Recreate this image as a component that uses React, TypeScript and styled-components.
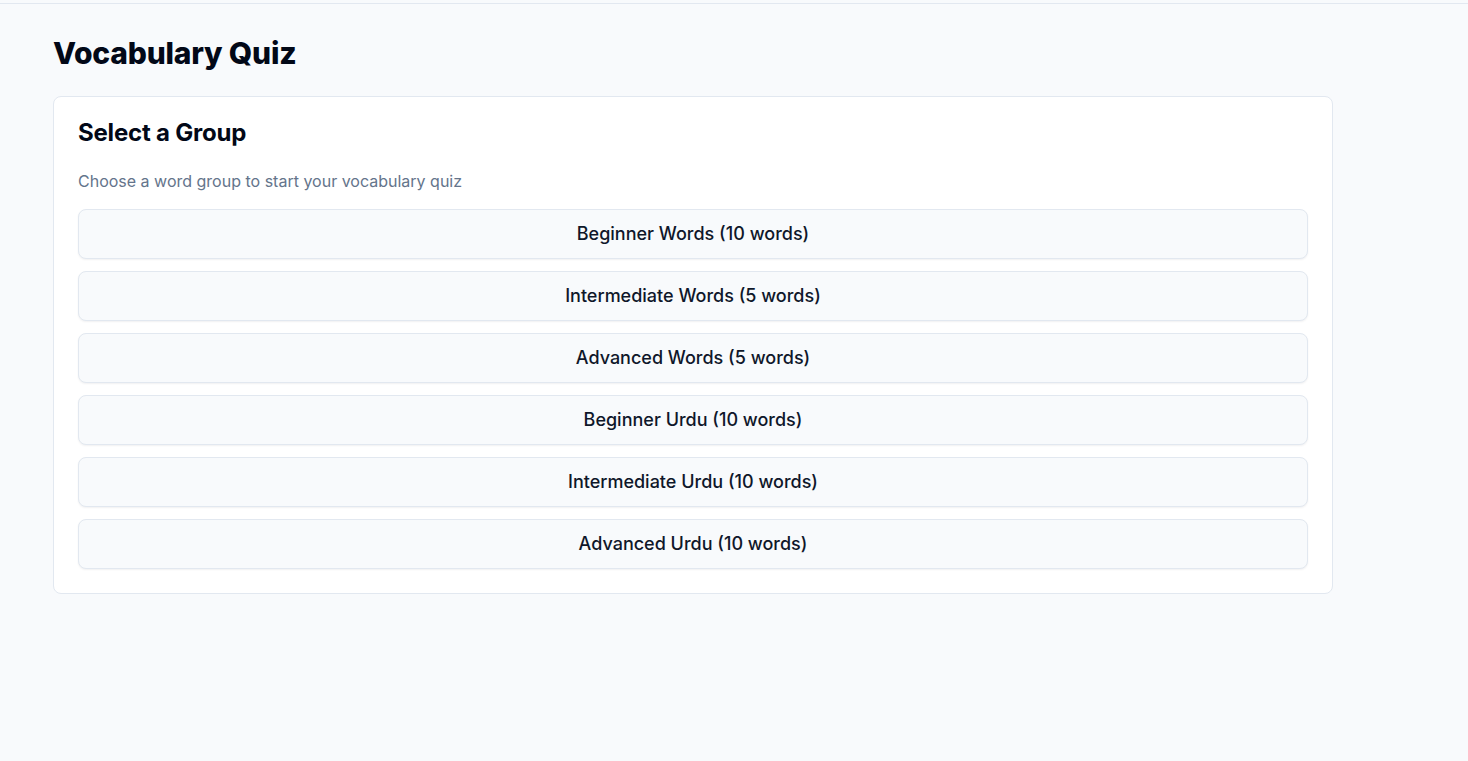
import React from "react";
import styled, { createGlobalStyle } from "styled-components";

const Global = createGlobalStyle`
  html, body { margin: 0; padding: 0; background: #f8fafc; }
  body { font-family: Inter, "Noto Sans", sans-serif; color: #020817; }
  * { box-sizing: border-box; }
`;

const TopBar = styled.div`
  height: 4px;
  border-bottom: 1px solid #e2e8f0;
  background: #f8fafc;
`;

const Page = styled.main`
  padding: 30px 0 40px 53px;
  min-height: 757px;
`;

const Title = styled.h1`
  margin: 0 0 24px;
  font-family: Inter, sans-serif;
  font-size: 30px;
  line-height: 38px;
  font-weight: 800;
  letter-spacing: -0.2px;
  color: #020817;
`;

const Card = styled.section`
  width: 1280px;
  background: #ffffff;
  border: 1px solid #e2e8f0;
  border-radius: 8px;
  padding: 24px;
`;

const CardTitle = styled.h2`
  margin: 0;
  font-family: Inter, sans-serif;
  font-size: 24px;
  line-height: 24px;
  font-weight: 700;
  letter-spacing: -0.2px;
  color: #020817;
`;

const Description = styled.p`
  margin: 24px 0 16px;
  font-size: 16px;
  line-height: 24px;
  color: #64748b;
`;

const List = styled.div`
  display: flex;
  flex-direction: column;
  gap: 12px;
`;

const GroupButton = styled.button`
  height: 50px;
  width: 100%;
  display: flex;
  align-items: center;
  justify-content: center;
  padding: 0 16px 2px;
  background: #f8fafc;
  border: 1px solid #e2e8f0;
  border-radius: 8px;
  box-shadow: 0 1px 2px rgba(15, 23, 42, 0.06);
  font-family: Inter, sans-serif;
  font-size: 18px;
  font-weight: 500;
  color: #0f172a;
  cursor: pointer;
`;

const groups = [
  "Beginner Words (10 words)",
  "Intermediate Words (5 words)",
  "Advanced Words (5 words)",
  "Beginner Urdu (10 words)",
  "Intermediate Urdu (10 words)",
  "Advanced Urdu (10 words)",
];

export default function App() {
  return (
    <>
      <Global />
      <TopBar />
      <Page>
        <Title>Vocabulary Quiz</Title>
        <Card>
          <CardTitle>Select a Group</CardTitle>
          <Description>Choose a word group to start your vocabulary quiz</Description>
          <List>
            {groups.map((g) => (
              <GroupButton key={g}>{g}</GroupButton>
            ))}
          </List>
        </Card>
      </Page>
    </>
  );
}
